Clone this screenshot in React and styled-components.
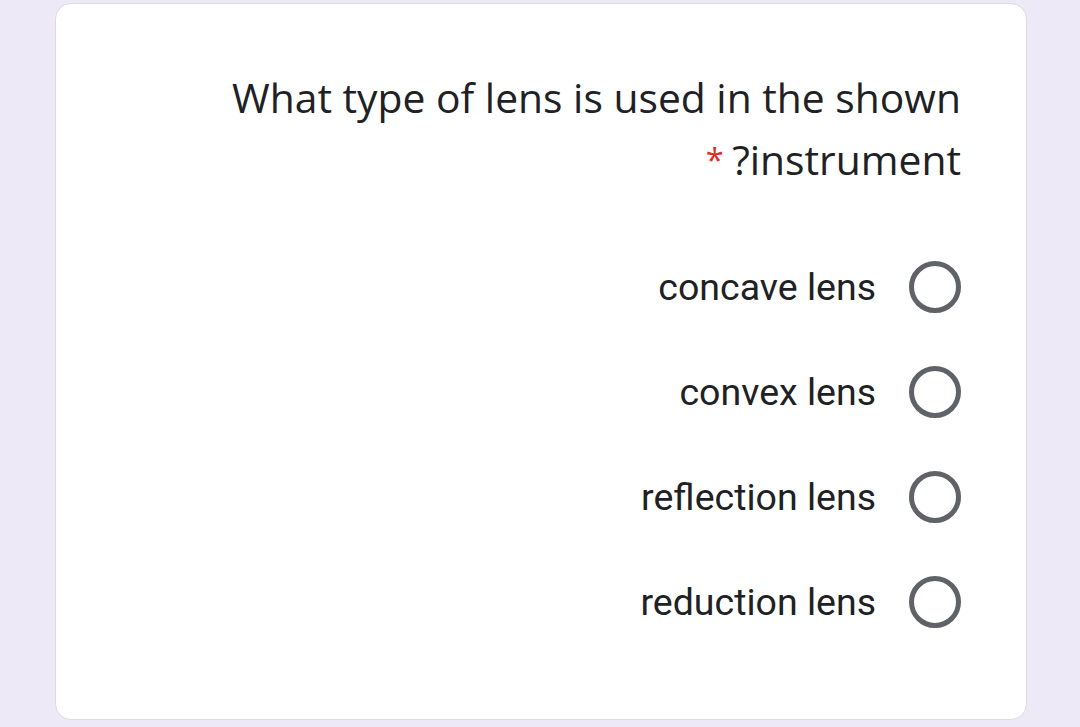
import React from "react";
import styled, { createGlobalStyle } from "styled-components";

const GlobalStyle = createGlobalStyle`
  html, body {
    margin: 0;
    padding: 0;
    background: #ede9f7;
  }
  body {
    font-family: "Roboto", "Liberation Sans", sans-serif;
  }
`;

const Page = styled.div`
  width: 1080px;
  height: 727px;
  padding: 3px 53px 0 55px;
  box-sizing: border-box;
  overflow: hidden;
`;

const Card = styled.div`
  height: 717px;
  box-sizing: border-box;
  background: #fff;
  border: 1.5px solid #dadce0;
  border-radius: 16px;
  padding: 62px 65px 0 0;
  direction: rtl;
`;

const Title = styled.div`
  font-family: "Open Sans", "Liberation Sans", sans-serif;
  font-size: 40.8px;
  line-height: 62px;
  color: #202124;
  text-align: right;
  width: 780px;
  margin-left: auto;
`;

const Req = styled.span`
  color: #d93025;
  font-size: 0.8em;
  vertical-align: 3px;
`;

const Options = styled.div`
  margin-top: 43px;
  display: flex;
  flex-direction: column;
`;

const Option = styled.label`
  display: flex;
  align-items: center;
  gap: 33px;
  height: 105px;
`;

const Radio = styled.span`
  width: 52px;
  height: 52px;
  box-sizing: border-box;
  border: 5px solid #5f6368;
  border-radius: 50%;
  flex: none;
`;

const OptionText = styled.span`
  font-family: "Roboto", "Liberation Sans", sans-serif;
  font-size: 37.5px;
  color: #202124;
`;

const options = ["concave lens", "convex lens", "reflection lens", "reduction lens"];

export default function App() {
  return (
    <>
      <GlobalStyle />
      <Page>
        <Card>
          <Title>
            What type of lens is used in the shown instrument?<Req> *</Req>
          </Title>
          <Options>
            {options.map((o) => (
              <Option key={o}>
                <Radio />
                <OptionText>{o}</OptionText>
              </Option>
            ))}
          </Options>
        </Card>
      </Page>
    </>
  );
}
